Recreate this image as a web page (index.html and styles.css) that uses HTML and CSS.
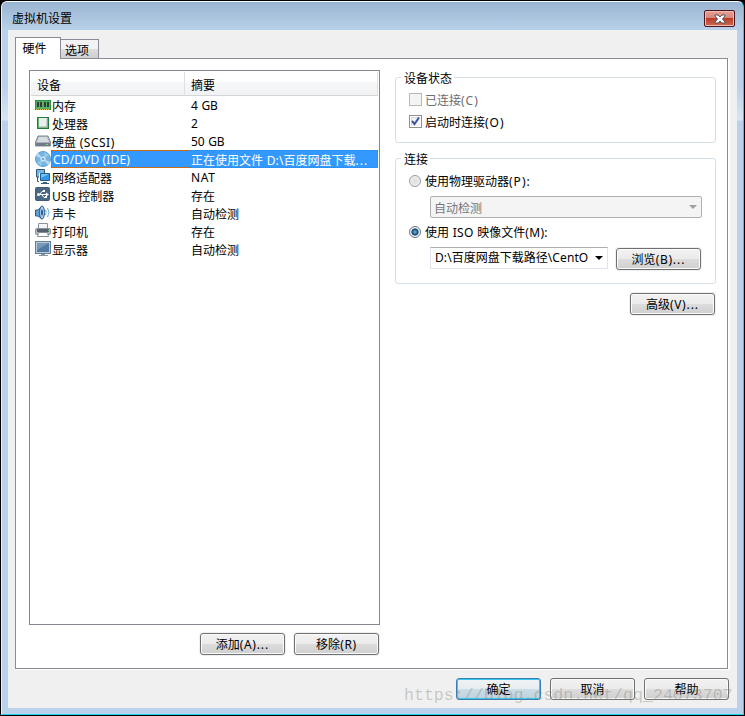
FILE: index.html
```html
<!DOCTYPE html>
<html lang="zh-CN">
<head>
<meta charset="utf-8">
<title>虚拟机设置</title>
<link rel="stylesheet" href="styles.css">
</head>
<body>
<main class="window">
  <header class="titlebar">
    <span class="title">虚拟机设置</span>
    <button class="close" aria-label="关闭"><svg width="12" height="10" viewBox="0 0 12 10"><path d="M1 1H4L6 3L8 1H11V2L8.500 5L11 8V9H8L6 7L4 9H1V8L3.500 5L1 2Z" fill="#fff" stroke="#535666" stroke-width="1"/></svg></button>
  </header>
  <div class="client">
    <nav class="tabs"><button class="tab active">硬件</button><button class="tab">选项</button></nav>
    <section class="panel">
      <div class="left">
        <div class="list">
          <div class="head"><span>设备</span><span>摘要</span></div>
          <div class="row"><svg class="icon" viewBox="0 0 16 16"><path d="M0 3H16V13H0Z" fill="#289345"/><path d="M1 4H15V12H1Z" fill="#57b266"/><path d="M2 5H4V10H2ZM5 5H7V10H5ZM9 5H11V10H9ZM12 5H14V10H12Z" fill="#343c3b"/><path d="M1 12.500H15" stroke="#e3bd4b" stroke-width="1" stroke-dasharray="1 1"/></svg><span class="name">内存</span><span class="value latin">4 GB</span></div>
          <div class="row"><svg class="icon" viewBox="0 0 16 16"><rect x="2" y="2" width="12" height="12" fill="#237a3e"/><rect x="3" y="3" width="10" height="10" fill="#58b96b"/><rect x="4" y="3" width="8" height="9" fill="#e9eeee"/><path d="M4 12H12V4" stroke="#a7b2ad" fill="none"/></svg><span class="name">处理器</span><span class="value latin">2</span></div>
          <div class="row"><svg class="icon" viewBox="0 0 16 16"><path d="M3 3H13L15.500 9V13H.5V9Z" fill="#a9b2bb" stroke="#848e98"/><path d="M4 4H12L14 9H2Z" fill="#d7dce0"/><path d="M1 10H15V13H1Z" fill="#707b87"/><path d="M11 11.500H13" stroke="#72d783"/></svg><span class="name">硬盘 <i class="latin scsi">(SCSI)</i></span><span class="value latin">50 GB</span></div>
          <div class="row selected"><svg class="icon" viewBox="0 0 16 16"><circle cx="8" cy="8" r="7.500" fill="#78b5e2" stroke="#5a9dd2"/><path d="M8 8L3 2A8 8 0 0 0 1 5ZM8 8L13 14L15 11Z" fill="#b5dcf5"/><path d="M8 8L10 1L14 4ZM8 8L6 15L2 12Z" fill="#93cbed"/><circle cx="8" cy="8" r="2.500" fill="#d1e7f5"/><circle cx="8" cy="8" r="1" fill="#4c8dc2"/></svg><span class="name latin">CD/DVD (IDE)</span><span class="value">正在使用文件 <i class="latin">D:\</i>百度网盘下载<i class="latin dots">...</i></span></div>
          <div class="row"><svg class="icon" viewBox="0 0 16 16"><path d="M1.500 .5H9.500V8H1.500Z" fill="#75b8e7" stroke="#31577b"/><path d="M4 4H16V13H4Z" fill="#fff"/><path d="M5.500 4.500H14.500V11.500H5.500Z" fill="#3296e2" stroke="#255b8a"/><path d="M6 5H14L6 9Z" fill="#73c4f4"/><path d="M2.500 8V12.500H4M8 13.500H12M6 14.500H14" stroke="#315f83" fill="none"/></svg><span class="name">网络适配器</span><span class="value latin nat">NAT</span></div>
          <div class="row"><svg class="icon" viewBox="0 0 16 16"><rect x=".5" y=".5" width="14" height="13" rx="1" fill="#4b6786" stroke="#405d7c"/><path d="M3 7.500H12M5 7L7 4.500H9M7 8L9 10.500H11" stroke="#fff" fill="none"/><circle cx="3.500" cy="7.500" r="1.500" fill="#fff"/><path d="M11 5.500L14 7.500L11 9.500ZM8 3H10V5H8ZM10 9H12V11H10Z" fill="#fff"/></svg><span class="name"><i class="latin">USB</i> 控制器</span><span class="value">存在</span></div>
          <div class="row"><svg class="icon" viewBox="0 0 16 16"><path d="M.5 5H3L7 1V14L3 11H.5Z" fill="#62a1d5" stroke="#315c8b"/><ellipse cx="7" cy="7.500" rx="2.500" ry="6.500" fill="#a6ccec" stroke="#315c8b"/><ellipse cx="7" cy="7.500" rx="1" ry="3" fill="#295587"/><path d="M10.500 5Q12 7.500 10.500 10M12.500 3Q15.500 7.500 12.500 12" stroke="#67add8" fill="none"/></svg><span class="name">声卡</span><span class="value">自动检测</span></div>
          <div class="row"><svg class="icon" viewBox="0 0 16 16"><path d="M3.500 .5H12.500V6H3.500Z" fill="#f4f5f6" stroke="#8a929b"/><rect x=".5" y="5.500" width="15" height="6" rx="1" fill="#b0b8c0" stroke="#8a939c"/><path d="M2 6H14V9H2Z" fill="#56616c"/><path d="M3.500 9.500H12.500L13.500 13.500H2.500Z" fill="#fff" stroke="#838b94"/><path d="M13 7.500H15" stroke="#5eda77"/></svg><span class="name">打印机</span><span class="value">存在</span></div>
          <div class="row"><svg class="icon" viewBox="0 0 16 16"><rect x=".5" y=".5" width="15" height="12" fill="#b9cbdb" stroke="#647f99"/><path d="M2 2H14V11H2Z" fill="#527aa4"/><path d="M2 2H14L2 9Z" fill="#7898b8"/><path d="M6 13H10V14H13V15H4V14H6Z" fill="#8795a2"/></svg><span class="name">显示器</span><span class="value">自动检测</span></div>
        </div>
        <div class="actions"><button class="btn">添加<i class="latin">(A)<b class="dots">...</b></i></button><button class="btn">移除<i class="latin">(R)</i></button></div>
      </div>
      <div class="right">
        <fieldset class="group status">
          <legend>设备状态</legend>
          <label class="option muted"><span class="check"></span><span>已连接<i class="latin">(C)</i></span></label>
          <label class="option"><span class="check"><svg width="11" height="11" viewBox="0 0 11 11"><path d="M2 5L4.500 8L9 1.500" fill="none" stroke="#40549b" stroke-width="2"/></svg></span><span>启动时连接<i class="latin">(O)</i></span></label>
        </fieldset>
        <fieldset class="group connection">
          <legend>连接</legend>
          <label class="option"><span class="radio"></span><span>使用物理驱动器<i class="latin">(P):</i></span></label>
          <div class="combo disabled"><span>自动检测</span><svg width="8" height="4" viewBox="0 0 8 4"><path d="M0 0H8L4 4Z" fill="#a0a0a0"/></svg></div>
          <label class="option iso"><span class="radio on"></span><span>使用 <i class="latin">ISO</i> 映像文件<i class="latin">(M):</i></span></label>
          <div class="file"><div class="combo"><span><i class="latin">D:\</i>百度网盘下载路径<i class="latin">\CentO</i></span><svg width="8" height="4" viewBox="0 0 8 4"><path d="M0 0H8L4 4Z"/></svg></div><button class="btn">浏览<i class="latin">(B)<b class="dots">...</b></i></button></div>
        </fieldset>
        <button class="btn advanced">高级<i class="latin">(V)<b class="dots">...</b></i></button>
      </div>
    </section>
    <footer class="footer"><button class="btn default">确定</button><button class="btn">取消</button><button class="btn">帮助</button></footer>
  </div>
  <div class="watermark">https://blog.csdn.net/qq_24073707</div>
</main>
</body>
</html>
```
FILE: styles.css
```css
* { box-sizing: border-box; }
body { margin: 0; background: #000; color: #000; font: 12px/18px "Noto Sans CJK SC", sans-serif; }
button { font: inherit; color: inherit; margin: 0; padding: 0; }
i { font-style: normal; }
b { font-weight: normal; }
svg { display: block; flex: none; }
.latin { font-family: "Noto Sans", "Open Sans", sans-serif; letter-spacing: .1px; }
.window { position: relative; width: 745px; height: 716px; padding: 1px 1px 1px 2px; background: #000; overflow: hidden; }
.window::before { content: ""; display: block; position: absolute; inset: 1px 1px 1px; border: 1px solid #20cfe8; border-left-color: #e6f2fb; border-top-color: #f5faff; border-radius: 6px 6px 0 0; background: linear-gradient(#99b4d1 0, #b9d1ea 28px, #b9d1ea 85px, #d7e6f6 118px, #b9d1ea 119px); }
.titlebar { position: relative; height: 29px; display: flex; justify-content: space-between; padding: 9px 9px 0 10px; }
.title { line-height: 16px; }
.close { width: 31px; height: 17px; display: flex; align-items: center; justify-content: center; border: 1px solid #4c1320; border-radius: 2px; background: linear-gradient(#e6a092 0, #d7887c 46%, #b93c27 50%, #cc6a50 100%); box-shadow: inset 0 0 0 1px #eebbb2; }
.client { position: relative; width: 729px; height: 678px; margin-left: 6px; padding: 7px 9px 0 7px; background: #f0f0f0; }
.tabs { height: 21px; display: flex; align-items: flex-end; }
.tab { position: relative; height: 19px; width: 38px; border: 1px solid #898c95; border-left: 0; border-bottom: 0; padding: 1px 5px 0 0; line-height: 18px; background: linear-gradient(#f3f3f3 48%, #dedede 50%, #cfcfcf); }
.tab.active { z-index: 1; height: 22px; width: 46px; margin-bottom: -1px; padding: 1px 7px 2px 0; border-left: 1px solid #898c95; background: #fff; }
.panel { height: 611px; display: flex; gap: 15px; padding: 11px 12px 0 13px; border: 1px solid #898c95; background: #fff; box-shadow: 2px 1px #fff; }
.left { width: 351px; flex: none; }
.list { height: 555px; border: 1px solid #828790; padding: 1px; }
.head { height: 24px; display: flex; border-bottom: 1px solid #d5d5d5; background: linear-gradient(#fff 40%, #f6f7f8 45%, #f1f2f4); }
.head span { width: 154px; padding: 4px 0 0 6px; border-right: 1px solid #dfe0e2; }
.head span + span { flex: 1; }
.row { display: flex; height: 18px; padding-left: 4px; line-height: 20px; }
.icon { width: 16px; height: 16px; margin-top: 1px; }
.name { width: 138px; padding-left: 1px; white-space: nowrap; }
.value { width: 189px; padding-left: 2px; white-space: nowrap; word-spacing: 1px; }
.value.latin { letter-spacing: -.2px; }
.selected .name, .selected .value { color: #fff; background: #3399ff; border-top: 1px dotted #c06612; border-bottom: 1px dotted #c06612; line-height: 17px; }
.selected .name { letter-spacing: .15px; border-left: 1px dotted #c06612; padding-left: 1px; }
.selected .value { border-right: 1px dotted #c06612; }
.value.nat { letter-spacing: .6px; }
.scsi { letter-spacing: .5px; margin-left: 1px; }
.latin .dots, .dots { letter-spacing: 1px; }
.actions { display: flex; gap: 9px; justify-content: flex-end; margin: 8px 0 0; padding-right: 1px; }
.btn { width: 85px; height: 22px; flex: none; border: 1px solid #707070; border-radius: 3px; background: linear-gradient(#f2f2f2 0, #ebebeb 49%, #dddddd 50%, #cfcfcf); box-shadow: inset 0 0 0 1px #fbfbfb, 0 0 0 1px #f0f0f0; line-height: 20px; white-space: nowrap; }
.btn .latin { letter-spacing: .7px; }
.right { width: 321px; flex: none; }
.group { margin: 0; border: 1px solid #d5dfe5; border-radius: 3px; padding: 0; min-width: 0; }
.group legend { height: 18px; margin-left: 5px; padding: 0 2px 0 3px; line-height: 18px; }
.status { height: 75px; margin-top: -2px; }
.option { display: flex; align-items: center; height: 22px; margin-left: 13px; gap: 3px; white-space: nowrap; }
.option .latin { letter-spacing: 1px; }
.muted { color: #6d6d6d; }
.status legend { margin-bottom: 2px; line-height: 20px; }
.status .option > span + span { padding-top: 2px; }
.check { width: 13px; height: 13px; border: 1px solid #8e8f8f; background: #f4f4f4; box-shadow: inset 0 0 0 1px #fff, inset 2px 2px #d4d9df; }
.muted .check { border-color: #b8b8b8; box-shadow: none; }
.connection { height: 135px; margin-top: 6px; }
.connection legend { margin-bottom: 3px; line-height: 20px; }
.radio { width: 12px; height: 12px; margin-right: 1px; border: 1px solid #999; border-radius: 50%; background: radial-gradient(circle, #ddd, #f5f5f5); }
.radio.on { border-color: #657684; background: radial-gradient(circle, #58c2ea 0, #163c60 3.2px, #f1f6fa 4px); }
.iso { margin-top: 3px; word-spacing: 1px; }
.iso .latin { letter-spacing: .3px; }
.combo { display: flex; align-items: center; justify-content: space-between; width: 178px; height: 22px; padding: 0 4px; border: 1px solid #e1e4ec; border-top-color: #abadb3; background: #fff; white-space: nowrap; }
.combo > span { margin-top: -1px; }
.combo.disabled { width: 272px; margin: 4px 0 0 34px; border: 1px solid #b0b0b0; border-radius: 2px; background: #f4f4f4; color: #777; padding-left: 3px; }
.combo.disabled > span { margin-top: 1px; }
.file { display: flex; gap: 8px; margin: 4px 0 0 34px; }
.file .btn { margin-top: 1px; }
.advanced { display: block; margin: 9px 0 0 235px; }
.footer { display: flex; justify-content: flex-end; gap: 9px; padding-top: 9px; margin-right: -1px; }
.default { border-color: #3c7fb1; background: linear-gradient(#f0f3f5 0, #e6edf1 49%, #cbdde6 50%, #bfd1dc); box-shadow: inset 0 0 0 1px #37c7ef; }
.watermark { position: absolute; left: 404px; top: 684px; font: 16.600px/24px "Liberation Mono", monospace; color: rgba(130, 130, 120, .38); pointer-events: none; }
```
